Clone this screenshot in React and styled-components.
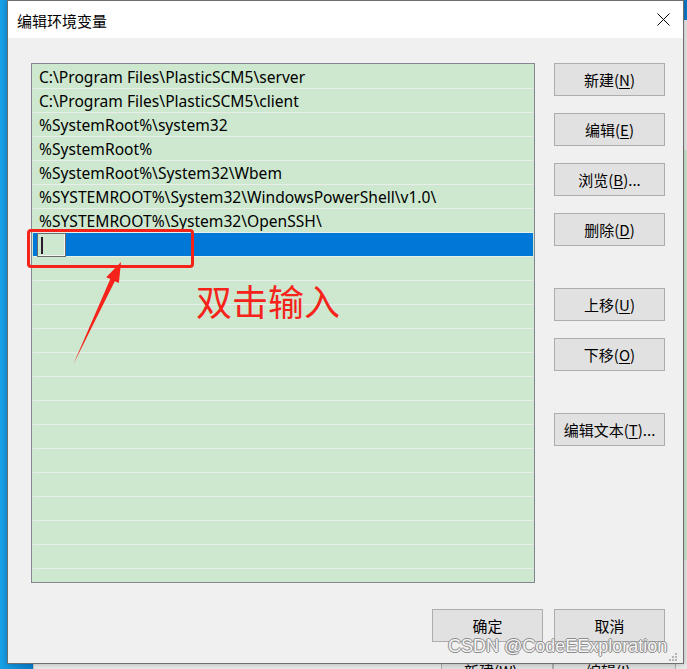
import React from "react";
import styled, { createGlobalStyle } from "styled-components";

const paths = [
  "C:\\Program Files\\PlasticSCM5\\server",
  "C:\\Program Files\\PlasticSCM5\\client",
  "%SystemRoot%\\system32",
  "%SystemRoot%",
  "%SystemRoot%\\System32\\Wbem",
  "%SYSTEMROOT%\\System32\\WindowsPowerShell\\v1.0\\",
  "%SYSTEMROOT%\\System32\\OpenSSH\\",
];

const GlobalStyle = createGlobalStyle`
  html, body {
    margin: 0;
    padding: 0;
  }
  body {
    width: 687px;
    height: 669px;
    overflow: hidden;
    background: #0a7fcf;
  }
`;

const App = () => {
  const rows = [...paths, null];
  while (rows.length < 22) rows.push("");

  return (
    <Desktop>
      <GlobalStyle />
      <BackWindow>
        <BackList />
        <BackButtons>
          <BackButton $w={112}>新建(W)...</BackButton>
          <BackButton $w={123}>编辑(I)...</BackButton>
        </BackButtons>
      </BackWindow>

      <Dialog>
        <TitleBar>
          <Title>编辑环境变量</Title>
          <svg width="13" height="13" viewBox="0 0 13 13">
            <path d="M0.5 0.5 L12.5 12.5 M12.5 0.5 L0.5 12.5" stroke="#000" strokeWidth="1" />
          </svg>
        </TitleBar>
        <Body>
          <Main>
            <List>
              {rows.map((text, i) =>
                text === null ? (
                  <Row key={i} $selected>
                    <EditBox>
                      <Caret />
                    </EditBox>
                  </Row>
                ) : (
                  <Row key={i}>{text}</Row>
                )
              )}
            </List>
            <Side>
              <Button>新建(<u>N</u>)</Button>
              <Button>编辑(<u>E</u>)</Button>
              <Button>浏览(<u>B</u>)...</Button>
              <Button>删除(<u>D</u>)</Button>
              <Button $push>上移(<u>U</u>)</Button>
              <Button>下移(<u>O</u>)</Button>
              <Button $push>编辑文本(<u>T</u>)...</Button>
            </Side>
          </Main>
          <Footer>
            <Button>确定</Button>
            <Button>取消</Button>
          </Footer>
        </Body>
      </Dialog>

      {/* red annotation on top of the screenshot */}
      <RedBox />
      <ArrowLayer width="687" height="669" viewBox="0 0 687 669">
        <polygon
          points="73,365 110.3,279.1 106.2,277.2 121,262 118.9,283.1 114.8,281.2"
          fill="#f5231a"
        />
      </ArrowLayer>
      <Note>双击输入</Note>

      <Watermark>CSDN @CodeEExploration</Watermark>
      <Grip width="9" height="9" viewBox="0 0 9 9">
        <rect x="6" y="0" width="2" height="2" fill="#b5b5b5" />
        <rect x="3" y="3" width="2" height="2" fill="#b5b5b5" />
        <rect x="6" y="3" width="2" height="2" fill="#b5b5b5" />
        <rect x="0" y="6" width="2" height="2" fill="#b5b5b5" />
        <rect x="3" y="6" width="2" height="2" fill="#b5b5b5" />
        <rect x="6" y="6" width="2" height="2" fill="#b5b5b5" />
      </Grip>
    </Desktop>
  );
};

export default App;

const cjk = `"Noto Sans CJK SC", "Noto Sans", sans-serif`;

const Desktop = styled.div`
  position: relative;
  width: 687px;
  height: 669px;
  overflow: hidden;
  background: linear-gradient(to right, #17a2e8, #0a7bcc 33px);
`;

const BackWindow = styled.div`
  position: absolute;
  left: 33px;
  top: 20px;
  width: 700px;
  height: 700px;
  background: #e9e9e9;
  border-left: 1px solid #c4c4c4;
  display: flex;
  flex-direction: column;
  align-items: flex-end;
  padding-top: 130px;
  box-sizing: border-box;
`;

const BackList = styled.div`
  width: 60px;
  height: 410px;
  background: #cde8cf;
  border-left: 1px solid #828790;
`;

const BackButtons = styled.div`
  align-self: flex-start;
  display: flex;
  margin-top: 94px;
  margin-left: 407px;
`;

const BackButton = styled.div`
  width: ${(p) => p.$w}px;
  height: 33px;
  box-sizing: border-box;
  border: 1px solid #adadad;
  background: #e1e1e1;
  font: 15px ${cjk};
  display: flex;
  align-items: center;
  justify-content: center;
  color: #000;
`;

const Dialog = styled.div`
  position: absolute;
  left: 7px;
  top: 0;
  width: 677px;
  height: 664px;
  box-sizing: border-box;
  border: 1px solid #6e6e6e;
  background: #f0f0f0;
  display: flex;
  flex-direction: column;
  box-shadow: 0 0 6px rgba(0, 0, 0, 0.25);
`;

const TitleBar = styled.div`
  height: 37px;
  flex-shrink: 0;
  background: #fff;
  display: flex;
  align-items: center;
  justify-content: space-between;
  padding: 0 13px 0 9px;
`;

const Title = styled.div`
  font: 15px ${cjk};
  color: #000;
  margin-top: 1px;
`;

const Body = styled.div`
  flex: 1;
  display: flex;
  flex-direction: column;
  padding: 25px 18px 21px 23px;
`;

const Main = styled.div`
  display: flex;
  gap: 19px;
  height: 520px;
`;

const List = styled.div`
  width: 504px;
  height: 520px;
  box-sizing: border-box;
  border: 1px solid #828790;
  background: #cde8cf;
  padding: 1px 1px 0;
  overflow: hidden;
`;

const Row = styled.div`
  height: 24px;
  box-sizing: border-box;
  border-bottom: 1px solid #eaeeea;
  background: ${(p) => (p.$selected ? "#0078d7" : "transparent")};
  display: flex;
  align-items: center;
  padding-left: ${(p) => (p.$selected ? 4 : 6)}px;
  font: 15.6px "Noto Sans", sans-serif;
  color: #000;
  white-space: nowrap;
`;

const EditBox = styled.div`
  width: 29px;
  height: 24px;
  align-self: flex-start;
  box-sizing: border-box;
  border: 1px solid #6a6a6a;
  box-shadow: inset -1px -1px 0 #f4f4f4;
  background: #cde8cf;
  display: flex;
  align-items: center;
  padding-left: 3px;
`;

const Caret = styled.div`
  width: 2px;
  height: 17px;
  background: #2a1a2a;
`;

const Side = styled.div`
  width: 111px;
  display: flex;
  flex-direction: column;
  gap: 17px;
`;

const Button = styled.div`
  width: 111px;
  height: 33px;
  flex-shrink: 0;
  box-sizing: border-box;
  border: 1px solid #adadad;
  background: #e1e1e1;
  font: 15px ${cjk};
  color: #000;
  display: flex;
  align-items: center;
  justify-content: center;
  margin-top: ${(p) => (p.$push ? 25 : 0)}px;

  u {
    text-underline-offset: 2px;
  }
`;

const Footer = styled.div`
  display: flex;
  justify-content: flex-end;
  gap: 11px;
  margin-top: 26px;
`;

const RedBox = styled.div`
  position: absolute;
  left: 27px;
  top: 229px;
  width: 167px;
  height: 39px;
  box-sizing: border-box;
  border: 3px solid #f5231a;
  border-radius: 4px;
`;

const ArrowLayer = styled.svg`
  position: absolute;
  left: 0;
  top: 0;
`;

const Note = styled.div`
  position: absolute;
  left: 196px;
  top: 280px;
  font: 36px/40px ${cjk};
  color: #f5231a;
  white-space: nowrap;
`;

const Watermark = styled.div`
  position: absolute;
  left: 448px;
  top: 636px;
  font: 18px "Liberation Sans", Arial, sans-serif;
  color: #f4f4f4;
  text-shadow: 1px 0 0 #8c8c8c, -1px 0 0 #8c8c8c, 0 1px 0 #8c8c8c, 0 -1px 0 #8c8c8c;
  white-space: nowrap;
`;

const Grip = styled.svg`
  position: absolute;
  left: 669px;
  top: 653px;
`;
